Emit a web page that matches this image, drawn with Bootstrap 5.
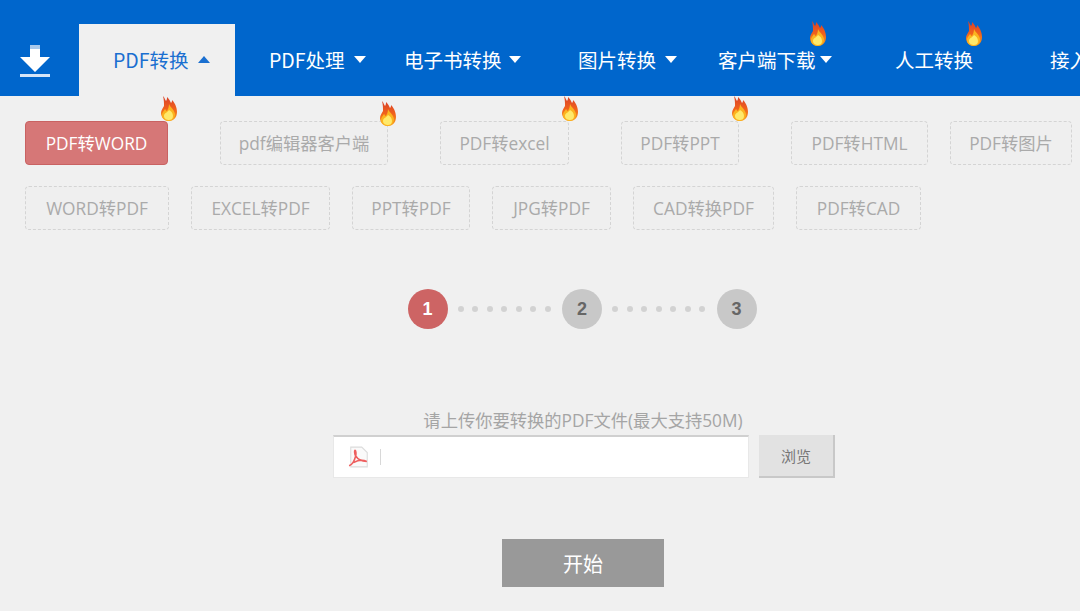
<!DOCTYPE html>
<html lang="zh-CN">

<head>
  <meta charset="UTF-8" />
  <meta name="viewport" content="width=device-width, initial-scale=1.0" />
  <title>PDF转换</title>
  <link href="https://cdn.jsdelivr.net/npm/bootstrap@5.3.2/dist/css/bootstrap.min.css" rel="stylesheet" />
  <script src="https://cdn.jsdelivr.net/npm/bootstrap@5.3.2/dist/js/bootstrap.bundle.min.js"></script>
  <style>
    body {
      background: #f0f0f0;
      font-family: "Noto Sans CJK SC", "Liberation Sans", sans-serif;
      overflow: hidden;
      height: 611px;
    }

    /* top bar */
    .top-bar {
      background: #0066cc;
      height: 96px;
      flex-wrap: nowrap;
      white-space: nowrap;
    }

    .logo-cell {
      width: 79px;
      height: 96px;
      padding: 44px 0 0 20px;
      flex: none;
    }

    .tab-item {
      color: #fff;
      font-size: 19.5px;
      height: 72px;
      line-height: 72px;
      flex: none;
      text-decoration: none;
      position: relative;
    }

    .tab-item:hover {
      color: #fff;
    }

    .tab-item.current {
      background: #f0f0f0;
      color: #1a6fd0;
      width: 156px;
      padding-left: 34px;
    }

    .w-a { width: 169px; padding-left: 34px; }
    .w-b { width: 174px; }
    .w-c { width: 140px; }
    .w-d { width: 177px; }
    .w-e { width: 155px; }

    .tri {
      display: inline-block;
      width: 0;
      height: 0;
      margin-left: 9px;
      border-left: 6px solid transparent;
      border-right: 6px solid transparent;
      border-top: 7px solid #fff;
      vertical-align: 5px;
    }

    .tri.up {
      border-top: 0;
      border-bottom: 7px solid #1a6fd0;
    }

    .tri.near {
      margin-left: 7px;
    }

    .tri.tight {
      margin-left: 4px;
    }

    .flame {
      position: absolute;
      width: 20px;
      height: 27px;
    }

    .nav-fire-a { left: 90px; top: -4px; }
    .nav-fire-b { left: 69px; top: -4px; }
    .fire-a { right: -12px; top: -27px; }
    .fire-b { right: -11px; top: -22px; }

    /* tool buttons */
    .tool-area {
      padding: 25px 0 0 25px;
      gap: 21px;
    }

    .tool-row {
      gap: 22px;
    }

    .tool-btn {
      position: relative;
      height: 44px;
      padding: 0;
      font-family: "Open Sans", "Noto Sans CJK SC", sans-serif;
      font-size: 17.3px;
      line-height: 44px;
      text-align: center;
      color: #aaa;
      background: #efefef;
      border: 1px dashed #d4d4d4;
      border-radius: 4px;
      white-space: nowrap;
    }

    .tool-btn.picked {
      background: #d67777;
      border: 1px solid #c96262;
      color: #fff;
    }

    .hot-gap {
      margin-right: 30px;
    }

    .bw-118 { width: 118px; }
    .bw-119 { width: 119px; }
    .bw-122 { width: 122px; }
    .bw-125 { width: 125px; }
    .bw-129 { width: 129px; }
    .bw-137 { width: 137px; }
    .bw-139 { width: 139px; }
    .bw-141 { width: 141px; }
    .bw-143 { width: 143px; }
    .bw-144 { width: 144px; }
    .bw-168 { width: 168px; }

    /* steps + upload, centred on x=583 */
    .work-area {
      padding-left: 86px;
    }

    .steps {
      margin-top: 59px;
      margin-right: 2px;
    }

    .step-num {
      width: 40px;
      height: 40px;
      border-radius: 50%;
      background: #c8c8c8;
      color: #666;
      font: bold 18px/40px "Liberation Sans", sans-serif;
      text-align: center;
    }

    .step-num.on {
      background: #cd6464;
      color: #fff;
    }

    .dot-run {
      gap: 8.5px;
      margin: 0 11.5px 0 10px;
    }

    .step-dot {
      width: 6px;
      height: 6px;
      border-radius: 50%;
      background: #d2d2d2;
    }

    .upload-tip {
      margin-top: 79px;
      height: 27px;
      line-height: 25px;
      font-family: "Open Sans", "Noto Sans CJK SC", sans-serif;
      font-size: 17.3px;
      color: #a5a5a5;
    }

    .file-row {
      margin-left: 2px;
    }

    .file-box {
      width: 416px;
      height: 43px;
      background: #fff;
      border: 1px solid #e8e8e8;
      border-top: 2px solid #d0d0d0;
      padding-left: 14px;
    }

    .file-sep {
      width: 1px;
      height: 16px;
      background: #d8d8d8;
      margin-left: 10px;
    }

    .browse-btn {
      width: 76px;
      height: 43px;
      margin-left: 10px;
      padding: 2px 0 0;
      font-size: 15px;
      color: #777;
      background: #e2e2e2;
      border: 0;
      border-right: 2px solid #c8c8c8;
      border-bottom: 2px solid #c8c8c8;
      border-radius: 0;
    }

    .start-btn {
      width: 162px;
      height: 48px;
      margin-top: 61px;
      padding: 2px 0 0;
      font-size: 20px;
      color: #fff;
      background: #999;
      border: 0;
      border-radius: 0;
    }
  </style>
</head>

<body>
  <svg width="0" height="0" class="d-block">
    <defs>
      <linearGradient id="fireOuter" x1="0" y1="0" x2="0" y2="1">
        <stop offset="0" stop-color="#d8402a" />
        <stop offset="0.5" stop-color="#f0601c" />
        <stop offset="1" stop-color="#f9a01e" />
      </linearGradient>
      <symbol id="fire" viewBox="0 0 20 27">
        <path d="M4 1c2 2 2 4 3 5 1-1 1-3 1-4 3 3 3 4 4 6 1-1 1-2 1-3 4 4 5 9 5 12 0 6-4 9-8 9s-8-3-8-8c0-3 2-5 3-7 0-3 0-6-1-10z" fill="url(#fireOuter)" />
        <path d="M10 9c1 3 5 5 6 10 0 4-3 7-6 7s-7-2-7-6c0-3 2-4 3-6 1 1 1 2 2 2 1-2 2-4 2-7z" fill="#fbb31f" />
        <path d="M10 15c2 1 4 3 4 6s-2 4-4 4-5-1-5-4 3-3 5-6z" fill="#ffe96a" />
      </symbol>
    </defs>
  </svg>

  <!-- Navbar -->
  <nav class="top-bar d-flex align-items-end">
    <div class="logo-cell">
      <svg width="30" height="34" viewBox="0 0 30 34">
        <rect x="10" y="1" width="10" height="4" fill="#a9c9ec" />
        <path d="M10 5h10v8h10L15 28 0 13h10z" fill="#fff" />
        <rect y="30" width="30" height="3" fill="#d5e5f7" />
      </svg>
    </div>
    <a class="tab-item current" href="#">PDF转换<span class="tri up"></span></a>
    <a class="tab-item w-a" href="#">PDF处理<span class="tri"></span></a>
    <a class="tab-item w-b" href="#">电子书转换<span class="tri near"></span></a>
    <a class="tab-item w-c" href="#">图片转换<span class="tri"></span></a>
    <a class="tab-item w-d" href="#">客户端下载<span class="tri tight"></span>
      <svg class="flame nav-fire-a"><use href="#fire" /></svg>
    </a>
    <a class="tab-item w-e" href="#">人工转换
      <svg class="flame nav-fire-b"><use href="#fire" /></svg>
    </a>
    <a class="tab-item" href="#">接入</a>
  </nav>

  <!-- Tool buttons -->
  <div class="tool-area d-flex flex-column">
    <div class="tool-row d-flex">
      <div class="tool-btn picked hot-gap bw-143">PDF转WORD<svg class="flame fire-a"><use href="#fire" /></svg></div>
      <div class="tool-btn hot-gap bw-168">pdf编辑器客户端<svg class="flame fire-b"><use href="#fire" /></svg></div>
      <div class="tool-btn hot-gap bw-129">PDF转excel<svg class="flame fire-a"><use href="#fire" /></svg></div>
      <div class="tool-btn hot-gap bw-118">PDF转PPT<svg class="flame fire-a"><use href="#fire" /></svg></div>
      <div class="tool-btn bw-137">PDF转HTML</div>
      <div class="tool-btn bw-122">PDF转图片</div>
    </div>
    <div class="tool-row d-flex">
      <div class="tool-btn bw-144">WORD转PDF</div>
      <div class="tool-btn bw-139">EXCEL转PDF</div>
      <div class="tool-btn bw-118">PPT转PDF</div>
      <div class="tool-btn bw-119">JPG转PDF</div>
      <div class="tool-btn bw-141">CAD转换PDF</div>
      <div class="tool-btn bw-125">PDF转CAD</div>
    </div>
  </div>

  <!-- Steps and upload -->
  <div class="work-area d-flex flex-column align-items-center">
    <div class="steps d-flex align-items-center">
      <div class="step-num on">1</div>
      <div class="dot-run d-flex">
        <i class="step-dot"></i><i class="step-dot"></i><i class="step-dot"></i><i class="step-dot"></i><i class="step-dot"></i><i class="step-dot"></i><i class="step-dot"></i>
      </div>
      <div class="step-num">2</div>
      <div class="dot-run d-flex">
        <i class="step-dot"></i><i class="step-dot"></i><i class="step-dot"></i><i class="step-dot"></i><i class="step-dot"></i><i class="step-dot"></i><i class="step-dot"></i>
      </div>
      <div class="step-num">3</div>
    </div>
    <div class="upload-tip">请上传你要转换的PDF文件(最大支持50M)</div>
    <div class="file-row d-flex">
      <div class="file-box d-flex align-items-center">
        <svg width="22" height="22" viewBox="0 0 20 20">
          <path d="M2.500 1h10l5 5v13h-15z" fill="#fafafa" stroke="#dcdcdc" />
          <path d="M1 18c3-1 5-5 6-9 .4-2 .2-5-.5-5s-.6 3 .5 5c1.500 2.500 4 5 10 5-3-1.500-8-1-12 1" fill="none" stroke="#ee5f5f" stroke-width="1.500" />
        </svg>
        <span class="file-sep"></span>
      </div>
      <button type="button" class="btn browse-btn">浏览</button>
    </div>
    <button type="button" class="btn start-btn">开始</button>
  </div>
</body>

</html>
